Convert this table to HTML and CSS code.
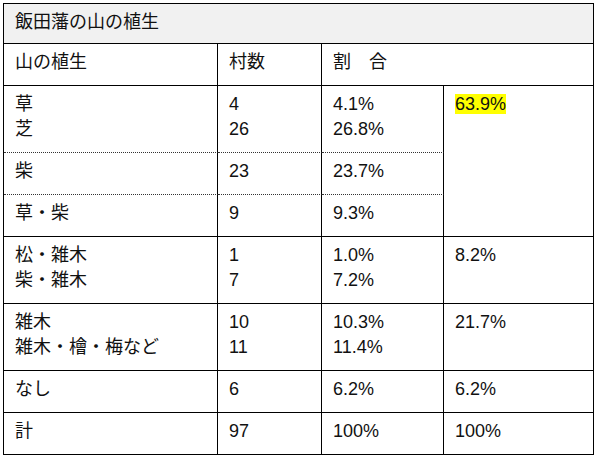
FILE: index.html
```html
<!DOCTYPE html>
<html lang="ja">
<head>
<meta charset="utf-8">
<link rel="stylesheet" href="styles.css">
</head>
<body>
<div class="wrap">
<table class="veg">
  <colgroup>
    <col class="c1"><col class="c2"><col class="c3"><col class="c4">
  </colgroup>
  <tr class="title"><td colspan="4">飯田藩の山の植生</td></tr>
  <tr><td>山の植生</td><td>村数</td><td colspan="2">割　合</td></tr>
  <tr class="dot">
    <td>草<br>芝</td><td>4<br>26</td><td>4.1%<br>26.8%</td>
    <td rowspan="3"><span class="hl">63.9%</span></td>
  </tr>
  <tr class="dot"><td>柴</td><td>23</td><td>23.7%</td></tr>
  <tr><td>草・柴</td><td>9</td><td>9.3%</td></tr>
  <tr><td>松・雑木<br>柴・雑木</td><td>1<br>7</td><td>1.0%<br>7.2%</td><td>8.2%</td></tr>
  <tr><td>雑木<br>雑木・檜・梅など</td><td>10<br>11</td><td>10.3%<br>11.4%</td><td>21.7%</td></tr>
  <tr><td>なし</td><td>6</td><td>6.2%</td><td>6.2%</td></tr>
  <tr><td>計</td><td>97</td><td>100%</td><td>100%</td></tr>
</table>
</div>
</body>
</html>
```

FILE: styles.css
```css
html, body {
  margin: 0;
  padding: 0;
  background: #ffffff;
}
.wrap {
  padding: 3px 0 0 3px;
}
.veg {
  border-collapse: separate;
  border-spacing: 0;
  table-layout: fixed;
  width: 591px;
  border-top: 1px solid #000;
  border-left: 1px solid #000;
  font-family: "Liberation Sans", Arial, "Noto Sans CJK JP", sans-serif;
  font-size: 18px;
  line-height: 25px;
  color: #111;
}
.c1 { width: 214px; }
.c2 { width: 104px; }
.c3 { width: 122px; }
.c4 { width: 150px; }
.veg td {
  box-sizing: border-box;
  border-right: 1px solid #000;
  border-bottom: 1px solid #000;
  padding: 6px 8px 10px 11px;
  vertical-align: top;
  text-align: left;
  white-space: nowrap;
}
.veg tr.title td {
  background: #f1f1f1;
  padding-top: 6px;
  padding-bottom: 8px;
}
.veg tr.dot td {
  border-bottom: 1px dotted #333;
}
.veg tr.dot td[rowspan] {
  border-bottom: 1px solid #000;
}
.hl {
  background: #ffff00;
}
```
